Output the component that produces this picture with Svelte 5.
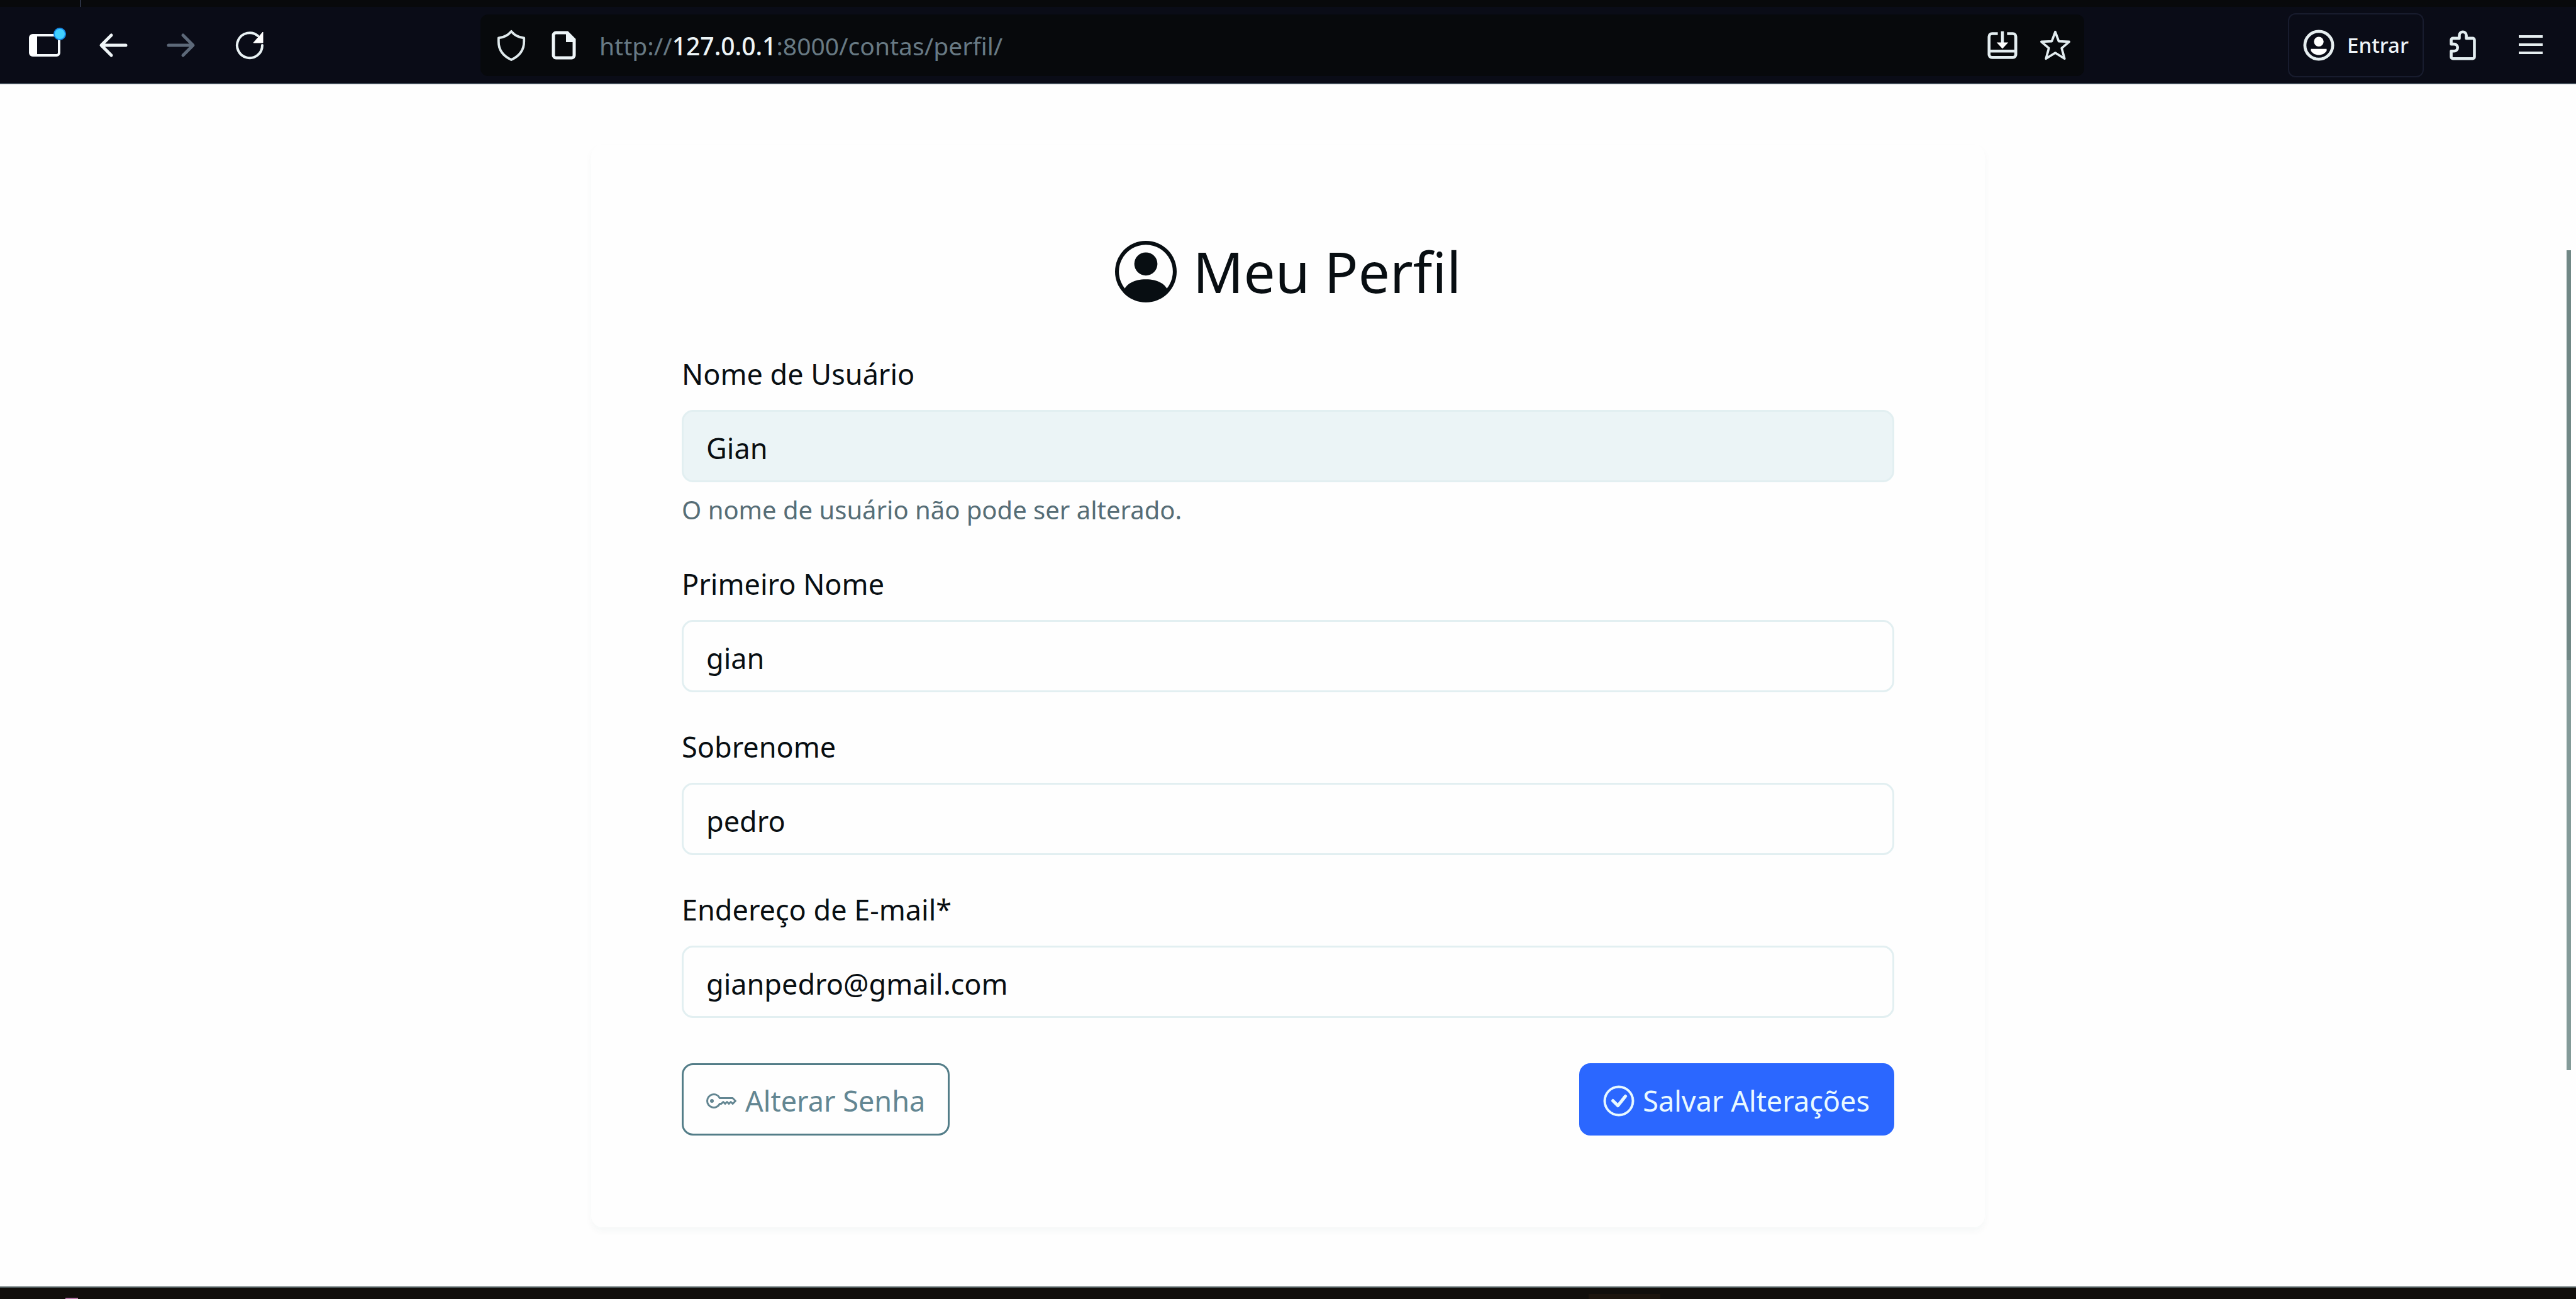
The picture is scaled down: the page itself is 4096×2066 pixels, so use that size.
<script>
  let username = $state('Gian');
  let firstName = $state('gian');
  let lastName = $state('pedro');
  let email = $state('gianpedro@gmail.com');
</script>

<div class="window">
  <div class="tabstrip"><span class="tab-divider"></span></div>

  <header class="toolbar">
    <nav class="nav-buttons" aria-label="Navegação">
      <button class="icon-btn sidebar-btn" aria-label="Barra lateral">
        <svg class="sidebar-icon" viewBox="0 2 64 56">
          <path d="M12 14H44a4 4 0 0 1 4 4V42a4 4 0 0 1-4 4H6a4 4 0 0 1-4-4V18a4 4 0 0 1 4-4z" fill="none" stroke="#f6fafc" stroke-width="4" />
          <path d="M2 14h11v32H2z" fill="#fff" />
          <circle cx="49" cy="12" r="9" fill="#40d0ff" stroke="#168ae8" stroke-width="2" />
        </svg>
      </button>
      <button class="icon-btn" aria-label="Voltar">
        <svg viewBox="0 0 48 48" fill="none" stroke="#eef4f6" stroke-width="5" stroke-linecap="round" stroke-linejoin="round"><path d="M21 8 5 24l16 16M6 24h38" /></svg>
      </button>
      <button class="icon-btn" aria-label="Avançar" disabled>
        <svg viewBox="0 0 48 48" fill="none" stroke="#5d6979" stroke-width="5" stroke-linecap="round" stroke-linejoin="round"><path d="M27 8l16 16-16 16M42 24H4" /></svg>
      </button>
      <button class="icon-btn" aria-label="Recarregar">
        <svg viewBox="0 0 48 48"><path d="M45 24A20 20 0 1 1 38 9" fill="none" stroke="#e9f2f4" stroke-width="4" stroke-linecap="round" /><path d="M46 3v17H31z" fill="#fff" stroke="#fff" stroke-width="1" stroke-linejoin="round" /></svg>
      </button>
    </nav>

    <div class="urlbar">
      <svg viewBox="0 0 48 52" fill="none" stroke="#dfe9ec" stroke-width="4" stroke-linejoin="round"><path d="M24 3C18 10 11 13 3 14v6c0 14 8 24 21 30 13-6 21-16 21-30v-6C37 13 30 10 24 3z" /></svg>
      <svg class="doc" viewBox="0 0 40 48"><path d="M7 4h18l11 11v25a4 4 0 0 1-4 4H7a4 4 0 0 1-4-4V8a4 4 0 0 1 4-4z" fill="none" stroke="#eef5f8" stroke-width="5" /><path d="M23 3v16h14z" fill="#eef5f8" /></svg>
      <a class="address" href="#perfil">http://<b>127.0.0.1</b>:8000/contas/perfil/</a>
      <svg class="install" viewBox="0 0 52 52" fill="none" stroke="#e3edf0" stroke-width="5" stroke-linejoin="round"><path d="M18 6H8a5 5 0 0 0-5 5v31a5 5 0 0 0 5 5h36a5 5 0 0 0 5-5V11a5 5 0 0 0-5-5H34M3 36h46M26 2v22" /><path d="M16 21h20l-10 11z" fill="#fff" stroke="none" /></svg>
      <svg viewBox="0 0 52 52" fill="none" stroke="#e3edf0" stroke-width="4" stroke-linejoin="round"><path d="M26 3l6 16 18 1-13 11 5 18-16-10-16 10 5-18L2 20l18-1z" /></svg>
    </div>

    <div class="actions">
      <button class="signin">
        <svg viewBox="0 0 52 52"><circle cx="26" cy="26" r="23" fill="none" stroke="#e6eef0" stroke-width="5" /><circle cx="26" cy="20" r="8" fill="#fff" /><path d="M13 32h26v3c-3 5-8 7-13 7s-10-2-13-7z" fill="#fff" /></svg>
        <span>Entrar</span>
      </button>
      <button class="icon-btn ext" aria-label="Extensões">
        <svg viewBox="0 0 48 52" fill="none" stroke="#e3edf0" stroke-width="5" stroke-linejoin="round"><path d="M18 14V9a6 6 0 0 1 12 0v5h11a3 3 0 0 1 3 3v29a3 3 0 0 1-3 3H7a3 3 0 0 1-3-3V36h5a6 6 0 0 0 0-12H4v-7a3 3 0 0 1 3-3z" /></svg>
      </button>
      <button class="icon-btn" aria-label="Menu">
        <svg class="menu" viewBox="0 0 40 48" stroke="#e6eef0" stroke-width="4"><path d="M1 10h38M1 23h38M1 36h38" /></svg>
      </button>
    </div>
  </header>

  <main class="page">
    <form class="card" onsubmit={(e) => e.preventDefault()}>
      <h1>
        <svg viewBox="0 0 16 16" fill="currentColor"><path d="M11 6a3 3 0 1 1-6 0 3 3 0 0 1 6 0" /><path fill-rule="evenodd" d="M0 8a8 8 0 1 1 16 0A8 8 0 0 1 0 8m8-7a7 7 0 0 0-5.468 11.37C3.242 11.226 4.805 10 8 10s4.757 1.225 5.468 2.37A7 7 0 0 0 8 1" /></svg>
        <span>Meu Perfil</span>
      </h1>

      <div class="field">
        <label for="username">Nome de Usuário</label>
        <input id="username" type="text" bind:value={username} disabled />
        <p class="help">O nome de usuário não pode ser alterado.</p>
      </div>
      <div class="field">
        <label for="first">Primeiro Nome</label>
        <input id="first" type="text" bind:value={firstName} />
      </div>
      <div class="field">
        <label for="last">Sobrenome</label>
        <input id="last" type="text" bind:value={lastName} />
      </div>
      <div class="field">
        <label for="email">Endereço de E-mail*</label>
        <input id="email" type="email" bind:value={email} />
      </div>

      <div class="buttons">
        <button type="button" class="btn outline">
          <svg viewBox="0 0 16 16" fill="currentColor"><path d="M0 8a4 4 0 0 1 7.465-2H14a.5.5 0 0 1 .354.146l1.5 1.5a.5.5 0 0 1 0 .708l-1.5 1.5a.5.5 0 0 1-.708 0L13 9.207l-.646.647a.5.5 0 0 1-.708 0L11 9.207l-.646.647a.5.5 0 0 1-.708 0L9 9.207l-.646.647A.5.5 0 0 1 8 10h-.535A4 4 0 0 1 0 8m4-3a3 3 0 1 0 2.712 4.285A.5.5 0 0 1 7.163 9h.63l.853-.854a.5.5 0 0 1 .708 0l.646.647.646-.647a.5.5 0 0 1 .708 0l.646.647.646-.647a.5.5 0 0 1 .708 0l.646.647.793-.793-1-1h-6.63a.5.5 0 0 1-.451-.285A3 3 0 0 0 4 5" /><path d="M4 8a1 1 0 1 1-2 0 1 1 0 0 1 2 0" /></svg>
          <span>Alterar Senha</span>
        </button>
        <button type="submit" class="btn primary">
          <svg viewBox="0 0 16 16" fill="currentColor" stroke="currentColor" stroke-width="0.3"><path d="M8 15A7 7 0 1 1 8 1a7 7 0 0 1 0 14m0 1A8 8 0 1 0 8 0a8 8 0 0 0 0 16" /><path d="m10.97 4.97-.02.022-3.473 4.425-2.093-2.094a.75.75 0 0 0-1.06 1.06L6.97 11.03a.75.75 0 0 0 1.079-.02l3.992-4.99a.75.75 0 0 0-1.071-1.05" /></svg>
          <span>Salvar Alterações</span>
        </button>
      </div>
    </form>
    <div class="scrollbar"></div>
  </main>

  <footer class="taskbar"><span class="task-dot"></span><span class="task-item"></span></footer>
</div>

<style>
  :global(body) { margin: 0; background: #fefefe; }
  .window {
    min-height: 100vh;
    display: flex;
    flex-direction: column;
    font-family: "Noto Sans", "Open Sans", sans-serif;
    color: #080e12;
  }
  button { font: inherit; cursor: pointer; }
  svg { display: block; flex: none; overflow: visible; }

  .tabstrip { height: 11px; background: #08090b; display: flex; padding-left: 127px; }
  .tab-divider { width: 2px; background: #2b3142; }

  .toolbar {
    height: 123px;
    box-sizing: border-box;
    padding: 0 48px 0 46px;
    border-bottom: 2px solid #3f4a55;
    background: #0a0c17;
    display: flex;
    align-items: center;
  }
  .nav-buttons { display: flex; gap: 60px; width: 718px; flex: none; }
  .icon-btn { border: 0; background: none; padding: 0; width: 48px; height: 56px; display: flex; align-items: center; justify-content: center; }
  .icon-btn svg { width: 48px; height: 48px; }
  .sidebar-btn { width: 50px; justify-content: flex-start; }
  .icon-btn .sidebar-icon { width: 64px; height: 56px; }
  .urlbar {
    flex: 1;
    height: 98px;
    box-sizing: border-box;
    border-radius: 12px;
    background: #07090c;
    display: flex;
    align-items: center;
    padding: 0 22px 0 25px;
  }
  .urlbar svg { width: 48px; height: 50px; }
  .urlbar .doc { width: 40px; height: 48px; margin: 0 36px 0 40px; }
  .urlbar .install { margin-right: 36px; }
  .address { flex: 1; color: #687a84; font-size: 39px; line-height: 56px; padding-top: 2px; text-decoration: none; }
  .address b { font-weight: 500; color: #edf5f7; }
  .actions { display: flex; align-items: center; margin-left: 324px; }
  .signin {
    height: 102px;
    width: 216px;
    box-sizing: border-box;
    border: 2px solid #181c2e;
    border-radius: 12px;
    background: none;
    color: #eef4f8;
    font-size: 33px;
    font-weight: 500;
    display: flex;
    align-items: center;
    justify-content: center;
    gap: 20px;
    padding: 0;
  }
  .signin svg { width: 50px; height: 50px; }
  .ext { margin: 0 60px 0 38px; }
  .icon-btn .menu { width: 40px; height: 48px; }

  .page { flex: 1; position: relative; display: flex; justify-content: center; align-items: flex-start; padding: 96px 0 80px; }
  .card {
    width: 54.1%;
    box-sizing: border-box;
    padding: 144px 144px 146px;
    border-radius: 18px;
    background: #fefefe;
    box-shadow: 0 6px 12px rgba(20, 70, 80, 0.04);
  }
  h1 { margin: 0 0 66px; font-weight: 400; font-size: 89px; line-height: 116px; display: flex; align-items: center; justify-content: center; gap: 26px; }
  h1 svg { width: 98px; height: 98px; }
  .field { margin-bottom: 48px; }
  label { display: block; font-size: 45px; line-height: 78px; margin-bottom: 18px; }
  input {
    display: block;
    width: 100%;
    height: 115px;
    box-sizing: border-box;
    border: 3px solid #e2eff1;
    border-radius: 18px;
    padding: 6px 36px 0;
    font: inherit;
    font-size: 45px;
    color: #080e12;
    background: #fefefe;
  }
  input:disabled { background: #ebf4f6; }
  .help { margin: 12px 0 0; font-size: 40px; line-height: 63px; color: #566d76; }
  .buttons { display: flex; justify-content: space-between; margin-top: 72px; }
  .btn {
    height: 115px;
    box-sizing: border-box;
    border: 3px solid #537d88;
    border-radius: 18px;
    padding: 4px 36px 0;
    display: flex;
    align-items: center;
    gap: 14px;
    font-size: 45px;
  }
  .btn svg { width: 48px; height: 48px; }
  .outline { background: none; color: #638692; }
  .primary { background: #2b67ff; border-color: #2b67ff; color: #e9f9ff; }

  .scrollbar { position: absolute; top: 264px; right: 8px; width: 7px; height: 1304px; background: linear-gradient(#718886 50%, #849b99 50%); }

  .taskbar { height: 20px; box-sizing: border-box; border-top: 2px solid #59686a; background: #110f0c; display: flex; align-items: flex-end; }
  .task-dot { width: 20px; height: 2px; margin-left: 104px; background: #b678a8; }
  .task-item { width: 114px; height: 8px; margin-left: 2402px; background: #1c150e; }
</style>
